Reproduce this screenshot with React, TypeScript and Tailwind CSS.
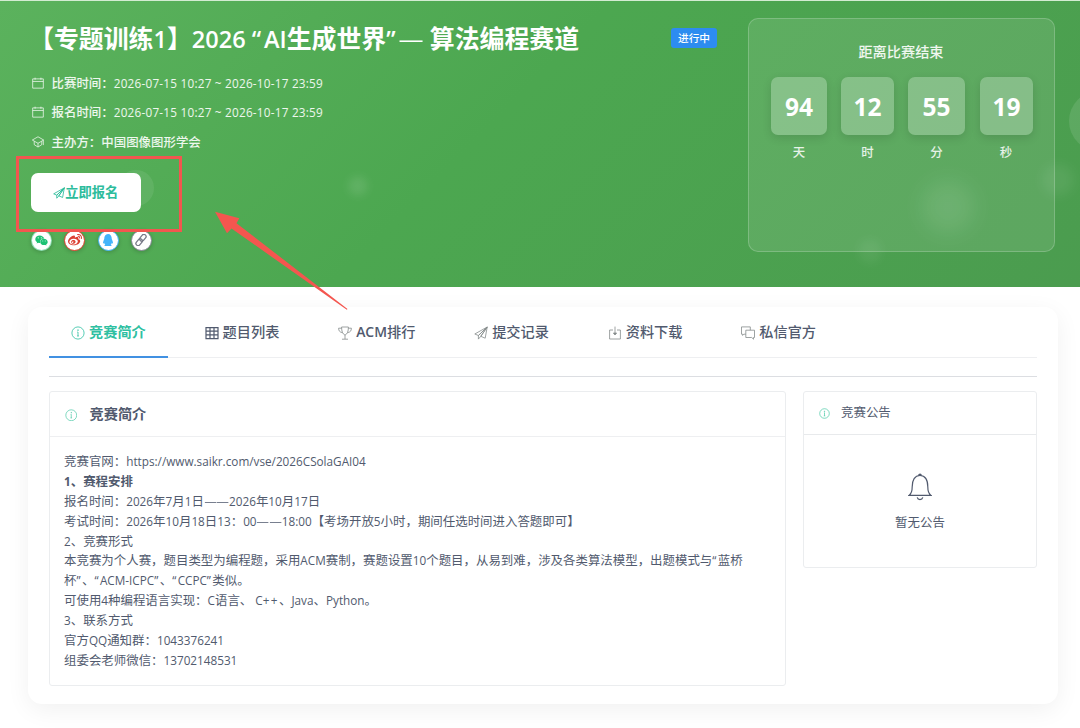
import React from "react";
import { FaQq, FaWeibo, FaWeixin } from "react-icons/fa";

/* Sets Latin runs slightly smaller than the surrounding Chinese glyphs. */
function Mixed({ text, latin = "text-[0.943em]" }: { text: string; latin?: string }) {
  const parts = text.split(/([“”—]|\+\+|[\x20-\x2a\x2c-\x7e]+)/);
  return (
    <>
      {parts.map((p, i) => {
        if (p === "—") {
          return (
            <span key={i} className="mx-[0.06em] inline-block scale-x-[1.15] font-['Noto_Sans_CJK_SC',sans-serif] font-normal">
              {p}
            </span>
          );
        }
        if (p === "“" || p === "”" || p === "++") {
          return (
            <span key={i} className={`${latin} tracking-[0.12em]`}>
              {p}
            </span>
          );
        }
        return i % 2 === 1 ? (
          <span key={i} className={latin}>
            {p}
          </span>
        ) : (
          <span key={i} className="font-['Noto_Sans_CJK_SC',sans-serif]">
            {p}
          </span>
        );
      })}
    </>
  );
}

type IconProps = { className?: string };

function Svg({ className, children, w = 1 }: IconProps & { children: React.ReactNode; w?: number }) {
  return (
    <svg
      viewBox="0 0 14 14"
      fill="none"
      stroke="currentColor"
      strokeWidth={w}
      className={`shrink-0 ${className ?? ""}`}
    >
      {children}
    </svg>
  );
}

const InfoIcon = ({ className }: IconProps) => (
  <Svg className={className} w={0.8}>
    <circle cx="7" cy="7" r="6.1" />
    <path d="M7 6v4M6.3 6H7M6.1 10h1.8" />
    <circle cx="7" cy="4.1" r="0.35" fill="currentColor" />
  </Svg>
);

const CalendarIcon = ({ className }: IconProps) => (
  <Svg className={className} w={0.9}>
    <path d="M.8 2.2h12.4v10.8H.8zM.8 5.2h12.4M3.6 .8v2.4M10.4 .8v2.4" />
  </Svg>
);

const SchoolIcon = ({ className }: IconProps) => (
  <Svg className={className} w={0.9}>
    <path d="M7 .9 .4 4.7 7 8.5l6.6-3.8zM2.6 6.1v4L7 12.9l4.4-2.8V6.1M13.2 5v5.6M7 8.5v4.2" />
  </Svg>
);

const PlaneIcon = ({ className, w = 0.8 }: IconProps & { w?: number }) => (
  <Svg className={className} w={w}>
    <path
      d="M13.2 1 .8 8l3.6 1.5zM13.2 1l-2 11.2-4.4-1.9zM13.2 1 4.4 9.5v3.6l2.4-2.8M13.2 1 6.8 10.3"
      strokeLinejoin="round"
    />
  </Svg>
);

const GridIcon = ({ className }: IconProps) => (
  <Svg className={className} w={1.2}>
    <path d="M1 1.6h12v11H1zM1 5.2h12M1 8.9h12M5 1.6v11M9 1.6v11" />
  </Svg>
);

const TrophyIcon = ({ className }: IconProps) => (
  <Svg className={className} w={0.8}>
    <path d="M3.6 1h6.8c0 4.3-.9 7-3.4 8.1C4.5 8 3.6 5.3 3.6 1zM3.6 2.2H.6c0 2.6 1.3 4.2 3.8 4.4M10.4 2.2h3c0 2.6-1.3 4.2-3.8 4.4M7 9v4M4 13.2h6" />
  </Svg>
);

const DownloadIcon = ({ className }: IconProps) => (
  <Svg className={className} w={0.8}>
    <path d="M5 4H1.6v9h10.8V4H9M7 .6v7.8" />
    <path d="M5.4 7h3.2L7 9z" fill="currentColor" />
  </Svg>
);

const ChatIcon = ({ className }: IconProps) => (
  <Svg className={className} w={0.8}>
    <path d="M4.8 8.2H2.9L1.6 9.4V8.2H.5V.9h8.8v3.3" />
    <path d="M4.8 4.2h8.7v7.3h-1v1.7l-1.8-1.7H4.8z" />
  </Svg>
);

const BellIcon = ({ className }: IconProps) => (
  <svg viewBox="0 0 24 28" fill="none" stroke="currentColor" strokeWidth="1.2" className={className}>
    <path d="M1 22.4c2.6-1.7 3.2-4.4 3.2-8.6C4.2 7 6.7 2.5 12 2.5S19.8 7 19.8 13.8c0 4.2.6 6.9 3.2 8.6z" />
    <path d="M9.2 24.4c.4 1.5 1.4 2.2 2.8 2.2s2.4-.7 2.8-2.2" />
    <path d="M10.8 2.2c0-1.4 2.4-1.4 2.4 0z" fill="currentColor" />
  </svg>
);

const LinkIcon = ({ className }: IconProps) => (
  <Svg className={className} w={1.5}>
    <g transform="rotate(-50 7 7)">
      <rect x="-0.8" y="4.5" width="8.8" height="5" rx="2.5" />
      <rect x="6" y="4.5" width="8.8" height="5" rx="2.5" />
    </g>
  </Svg>
);

const metas = [
  { icon: CalendarIcon, label: "比赛时间：", value: "2026-07-15 10:27 ~ 2026-10-17 23:59" },
  { icon: CalendarIcon, label: "报名时间：", value: "2026-07-15 10:27 ~ 2026-10-17 23:59" },
  { icon: SchoolIcon, label: "主办方：", value: "中国图像图形学会" },
];

const units = [
  { value: "94", label: "天", width: "w-[56px]" },
  { value: "12", label: "时", width: "w-[53px]" },
  { value: "55", label: "分", width: "w-[57px]" },
  { value: "19", label: "秒", width: "ml-px w-[53px]" },
];

const tabs = [
  { icon: InfoIcon, label: "竞赛简介" },
  { icon: GridIcon, label: "题目列表", dark: true },
  { icon: TrophyIcon, label: "ACM排行" },
  { icon: PlaneIcon, label: "提交记录" },
  { icon: DownloadIcon, label: "资料下载" },
  { icon: ChatIcon, label: "私信官方" },
];

const lines = [
  "竞赛官网：https://www.saikr.com/vse/2026CSolaGAI04",
  "1、赛程安排",
  "报名时间：2026年7月1日——2026年10月17日",
  "考试时间：2026年10月18日13：00——18:00【考场开放5小时，期间任选时间进入答题即可】",
  "2、竞赛形式",
  "本竞赛为个人赛，题目类型为编程题，采用ACM赛制，赛题设置10个题目，从易到难，涉及各类算法模型，出题模式与“蓝桥",
  "杯”、“ACM-ICPC”、“CCPC”类似。",
  "可使用4种编程语言实现：C语言、 C++、Java、Python。",
  "3、联系方式",
  "官方QQ通知群：1043376241",
  "组委会老师微信：13702148531",
];

function ShareButton({ className, children }: { className: string; children: React.ReactNode }) {
  return (
    <span
      className={`flex size-[21px] items-center justify-center rounded-full border bg-white shadow-[0_1px_4px_rgba(0,0,0,0.2)] ${className}`}
    >
      {children}
    </span>
  );
}

function Hero() {
  return (
    <header className="relative flex h-[287px] justify-between overflow-hidden border-t border-[#d3ecd2] bg-[linear-gradient(135deg,#5bb25d_0%,#4ca750_45%,#4b9c4f_100%)] pl-[30px] pr-[25px] pt-[17px] text-white">
      <div className="absolute left-[118px] top-[169px] size-9 rounded-full bg-white/8" />
      <div className="absolute left-[348px] top-[175px] size-5 rounded-full bg-white/10 blur-[4px]" />
      <div className="absolute left-[1069px] top-[90px] size-[60px] rounded-full bg-white/10" />
      <div className="absolute left-[1042px] top-[163px] size-8 rounded-full bg-white/7 blur-[6px]" />
      <div className="absolute left-[922px] top-[180px] size-[52px] rounded-full bg-white/10 blur-[11px]" />
      <div className="absolute left-[858px] top-[238px] size-6 rounded-full bg-white/6 blur-[5px]" />

      <div className="relative flex w-[687px] flex-col">
        <div className="flex h-10 items-center justify-between">
          <h1 className="-ml-px whitespace-nowrap text-[24.9px] font-bold leading-10">
            <Mixed text="【专题训练1】2026 “AI生成世界”— 算法编程赛道" latin="text-[0.945em] font-semibold" />
          </h1>
          <span className="flex h-5 w-[46px] items-center justify-center rounded-[3px] bg-[#2d8cf0] text-[10.7px] font-medium">
            进行中
          </span>
        </div>
        <div className="mt-[10.5px] flex flex-col">
          {metas.map(({ icon: Icon, label, value }) => (
            <div key={label} className="flex h-[29.3px] items-center text-[12.45px] font-medium text-white/90">
              <Icon className="ml-[1.5px] mr-2 size-3" />
              <span className="whitespace-nowrap pt-[1.5px]">
                {label}
                <span className={value.startsWith("2") ? "font-normal tracking-[0.23px]" : ""}>
                  <Mixed text={value} />
                </span>
              </span>
            </div>
          ))}
        </div>
        <button className="ml-px mt-[16.5px] flex h-[39px] w-[109.5px] items-center justify-center rounded-[7px] bg-white pt-px text-[13.3px] font-bold text-[#2dbc9c]">
          <PlaneIcon className="size-3" w={1} />
          立即报名
        </button>
        <div className="ml-[1.2px] mt-[18px] flex gap-[12.2px]">
          <ShareButton className="border-[#1dc26b]/50 text-[#1dc274]">
            <FaWeixin size={13} />
          </ShareButton>
          <ShareButton className="border-[#e2402f] text-[#dc3f33]">
            <FaWeibo size={14} />
          </ShareButton>
          <ShareButton className="border-[#42b4fa] text-[#42b4fa]">
            <FaQq size={12} />
          </ShareButton>
          <ShareButton className="border-[#858894] text-[#777a88]">
            <LinkIcon className="size-3" />
          </ShareButton>
        </div>
      </div>

      <aside className="relative flex h-[234px] w-[307px] flex-col items-center rounded-[10px] border border-white/20 bg-white/10 pl-px pt-[21px]">
        <h2 className="h-6 pr-[2px] text-[14.2px] font-medium leading-6 text-white/90">距离比赛结束</h2>
        <div className="mt-[13px] flex gap-[14px]">
          {units.map((u) => (
            <div key={u.label} className="flex flex-col items-center">
              <div
                className={`flex h-[58px] items-center justify-center rounded-[7px] bg-white/25 pt-[3px] text-[24.5px] font-bold shadow-[0_3px_10px_rgba(0,0,0,0.12)] ${u.width}`}
              >
                {u.value}
              </div>
              <span className="mt-[8px] text-[12.45px] font-medium leading-5 text-white/85">{u.label}</span>
            </div>
          ))}
        </div>
      </aside>
    </header>
  );
}

function Tabs() {
  return (
    <nav className="flex h-[51px] gap-[14.8px] border-b border-[#eeeff1]">
      {tabs.map(({ icon: Icon, label, dark }, i) => (
        <div
          key={label}
          className={`-mb-px flex items-center gap-1 border-b-2 px-[22px] text-[14.2px] ${
            i === 0
              ? "border-[#4191e2] font-bold text-[#2fc0a2]"
              : "border-transparent font-medium text-[#515a6e]"
          }`}
        >
          <Icon className={`mt-[3px] size-[14px] ${i === 0 ? "" : dark ? "text-[#515a6e]" : "text-[#858b8b]"}`} />
          <span className="whitespace-nowrap">
            <Mixed text={label} latin="font-semibold text-[0.98em]" />
          </span>
        </div>
      ))}
    </nav>
  );
}

export default function App() {
  return (
    <div className="relative h-[728px] w-[1080px] overflow-hidden bg-white font-['Open_Sans','Noto_Sans_CJK_SC',sans-serif] text-[#515a6e]">
      <Hero />
      <main className="ml-[28px] mt-[20px] h-[397px] w-[1030px] rounded-[14px] bg-white px-[21px] shadow-[0_6px_24px_rgba(0,0,0,0.06)]">
        <Tabs />
        <hr className="mt-[18px] border-[#dcdee2]" />
        <div className="mt-[14px] flex items-start gap-[17px]">
          <section className="h-[295px] w-[737px] rounded-[3px] border border-[#ebedef]">
            <h3 className="flex h-[45px] items-center border-b border-[#eeeff1] pl-[14.5px] text-[14.2px] font-bold">
              <InfoIcon className="mr-[12.5px] mt-[2px] size-[12.5px] text-[#4fc9a8]" />
              竞赛简介
            </h3>
            <div className="pl-[14px] pt-[15px] text-[12.45px]">
              {lines.map((line, i) => (
                <p key={line} className={`h-[19.9px] whitespace-pre leading-[19.9px] ${i === 1 ? "font-bold" : ""}`}>
                  <Mixed text={line} />
                </p>
              ))}
            </div>
          </section>
          <aside className="h-[177px] w-[234px] rounded-[3px] border border-[#ebedef]">
            <h3 className="flex h-[43px] items-center border-b border-[#e8eaec] pl-[15px] text-[12.45px]">
              <InfoIcon className="mr-[11px] mt-px size-[11px] text-[#35c39c]" />
              竞赛公告
            </h3>
            <div className="flex flex-col items-center pt-[38px]">
              <BellIcon className="h-[28px] w-6" />
              <p className="mt-[12px] text-[12.45px] leading-5">暂无公告</p>
            </div>
          </aside>
        </div>
      </main>

      <div className="pointer-events-none absolute left-[16px] top-[156px] h-[76px] w-[166px] border-[3px] border-[#f2564f]" />
      <svg className="pointer-events-none absolute left-[210px] top-[205px] h-[110px] w-[145px]" viewBox="210 205 145 110">
        <path d="M215 211.7 239.3 218.3 236.5 223.2 347.5 309 346.8 309.8 231.5 228.5 227 233.3z" fill="#f4564f" />
      </svg>
    </div>
  );
}
